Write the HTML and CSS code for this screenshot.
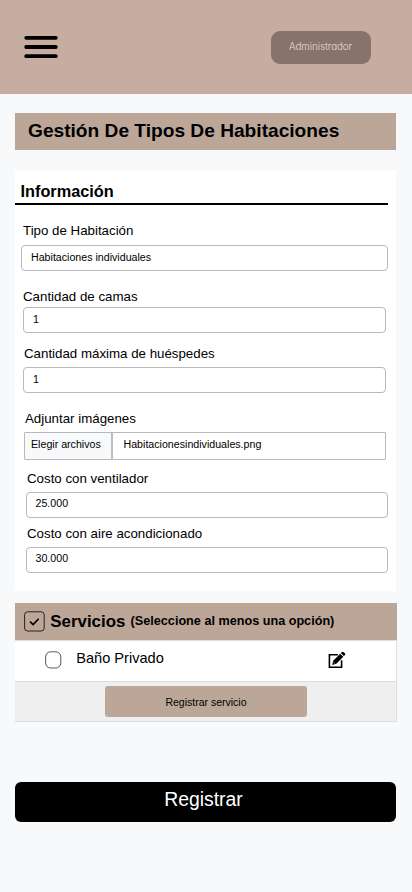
FILE: index.html
```html
<!DOCTYPE html>
<html lang="es">
<head>
<meta charset="utf-8">
<title>Gestión De Tipos De Habitaciones</title>
<link rel="stylesheet" href="styles.css">
</head>
<body>
<header class="topbar">
  <svg class="menu" width="34" height="24" viewBox="0 0 34 24" stroke="#000" stroke-width="3.8" stroke-linecap="round"><path d="M2.2 2.8H31.8M2.2 12H31.8M2.2 21.2H31.8"/></svg>
  <div class="role">Administrador</div>
</header>
<main>
  <h1 class="title">Gestión De Tipos De Habitaciones</h1>
  <section class="card">
    <h2 class="card-title">Información</h2>
    <div class="field type">
      <div class="label">Tipo de Habitación</div>
      <div class="input">Habitaciones individuales</div>
    </div>
    <div class="field beds">
      <div class="label">Cantidad de camas</div>
      <div class="input">1</div>
    </div>
    <div class="field guests">
      <div class="label">Cantidad máxima de huéspedes</div>
      <div class="input">1</div>
    </div>
    <div class="field images">
      <div class="label">Adjuntar imágenes</div>
      <div class="file"><span class="choose">Elegir archivos</span><span class="filename">Habitacionesindividuales.png</span></div>
    </div>
    <div class="field fan">
      <div class="label">Costo con ventilador</div>
      <div class="input">25.000</div>
    </div>
    <div class="field air">
      <div class="label">Costo con aire acondicionado</div>
      <div class="input">30.000</div>
    </div>
  </section>
  <section class="services">
    <div class="services-head">
      <svg class="check-all" width="21" height="21" viewBox="0 0 21 21" fill="none" stroke="#000"><rect x=".6" y=".8" width="19.6" height="19.2" rx="3" stroke-width=".8"/><path d="M6 10.7L9.1 13.6L14.7 7.7" stroke-width="1.6"/></svg>
      <span class="services-title">Servicios</span>
      <span class="hint">(Seleccione al menos una opción)</span>
    </div>
    <div class="service-row">
      <svg width="17" height="18" viewBox="0 0 17 18" fill="#fff" stroke="#222" stroke-width=".75"><rect x=".6" y=".8" width="15.2" height="16.2" rx="5"/></svg>
      <span class="service-name">Baño Privado</span>
      <svg class="edit" width="18" height="18" viewBox="0 0 18 18"><path d="M9.8 3.7H1.4V16.3H13.6V9.2" fill="none" stroke="#000" stroke-width="1.6"/><path d="M4.2 13.9L5.2 9.7L12.2 2.7L15.3 5.8L8.3 12.8Z"/><path d="M12.8 2.1L14 .9Q14.7.4 15.4 1L17 2.6Q17.6 3.3 17 4L15.8 5.1Z"/><path d="M5.7 11.3L6.8 12.4" stroke="#fff" stroke-width=".7"/></svg>
    </div>
    <div class="services-foot"><div class="add">Registrar servicio</div></div>
  </section>
  <div class="submit">Registrar</div>
</main>
</body>
</html>
```
FILE: styles.css
```css
* { box-sizing: border-box; }
body {
  margin: 0;
  height: 892px;
  background: #f8f9fb;
  color: #000;
  font-family: "Liberation Sans", Arial, sans-serif;
}
.topbar {
  display: flex;
  justify-content: space-between;
  align-items: center;
  height: 94px;
  padding: 0 41.5px 0 24px;
  background: #c6ada0;
}
.role {
  width: 100px;
  height: 33px;
  border-radius: 9px;
  background: #88736c;
  color: #e6dedb;
  font: 300 9.8px/32px Inter, sans-serif;
  font-feature-settings: "cv11";
  letter-spacing: -.05px;
  text-align: center;
}
main {
  display: flex;
  flex-direction: column;
  padding: 19px 16px 0 15px;
}
.title {
  height: 37px;
  margin: 0;
  padding-left: 13px;
  background: #bba698;
  font-size: 19.15px;
  line-height: 36px;
  white-space: nowrap;
}
.card {
  height: 421px;
  margin-top: 20px;
  padding-right: 8.4px;
  background: #fff;
}
.card-title {
  height: 35px;
  margin: 0 0 18px;
  padding: 11px 0 0 5.5px;
  border-bottom: 2px solid #000;
  font-size: 16.3px;
  line-height: 20px;
}
.field { display: flex; flex-direction: column; }
.label {
  height: 16px;
  font-size: 13.3px;
  line-height: 16px;
  white-space: nowrap;
}
.input {
  height: 26px;
  padding-left: 9px;
  border: 1px solid #b9b9b9;
  border-radius: 4px;
  font-size: 10.65px;
  line-height: 23px;
}
.type { padding-left: 6px; }
.type .label { padding-left: 2px; margin-bottom: 6px; }
.beds { margin-top: 18px; padding: 0 2px 0 8px; }
.beds .label { margin-bottom: 2px; }
.guests { margin-top: 13px; padding: 0 2px 0 8px; }
.guests .label { padding-left: 1px; margin-bottom: 5px; }
.guests .input { line-height: 22px; }
.images { margin-top: 18px; padding: 0 2px 0 9px; }
.images .label { padding-left: 1px; margin-bottom: 5px; }
.file {
  display: flex;
  height: 28px;
  border: 1px solid #b9b9b9;
  border-radius: 1px;
  font-size: 10.65px;
  line-height: 23px;
}
.choose {
  width: 88px;
  padding-left: 6px;
  border-right: 2px solid #bdbdbd;
  background: #f8f9fb;
  white-space: nowrap;
}
.filename { padding-left: 10.5px; }
.fan { margin-top: 11px; padding-left: 11px; margin-right: -.4px; }
.fan .label, .air .label { padding-left: 1px; margin-bottom: 5px; }
.fan .input, .air .input { padding-left: 8.5px; line-height: 21px; }
.air { margin-top: 8px; padding-left: 11px; margin-right: -.4px; }
.services {
  height: 119px;
  margin: 12px -.6px 0 0;
  border: solid #dedede;
  border-width: 0 1px 1px 0;
  background: #efefef;
}
.services-head {
  display: flex;
  height: 38px;
  margin-right: -1px;
  padding-left: 9px;
  border-bottom: 1px solid #e0dcda;
  background: #bba698;
  font-weight: bold;
  white-space: nowrap;
}
.check-all { margin-top: 8px; }
.services-title { margin-left: 5.3px; font-size: 16.9px; line-height: 37px; }
.hint { margin-left: 5.2px; font-size: 12.65px; line-height: 36px; }
.service-row {
  display: flex;
  align-items: flex-start;
  height: 41px;
  padding: 10px 50px 0 29.5px;
  border-bottom: 1px solid #dcdcdc;
  background: #fff;
}
.service-name {
  margin-left: 14.7px;
  font-size: 14.6px;
  line-height: 15px;
}
.edit { margin-left: auto; }
.services-foot { display: flex; padding: 4px 0 0 90px; }
.add {
  width: 202px;
  height: 31px;
  border-radius: 3px;
  background: #bba698;
  font-size: 10.5px;
  line-height: 33px;
  text-align: center;
}
.submit {
  height: 40px;
  margin-top: 60px;
  padding-right: 4px;
  border-radius: 6px;
  background: #000;
  color: #fff;
  font-size: 19.4px;
  line-height: 35px;
  text-align: center;
}
```
